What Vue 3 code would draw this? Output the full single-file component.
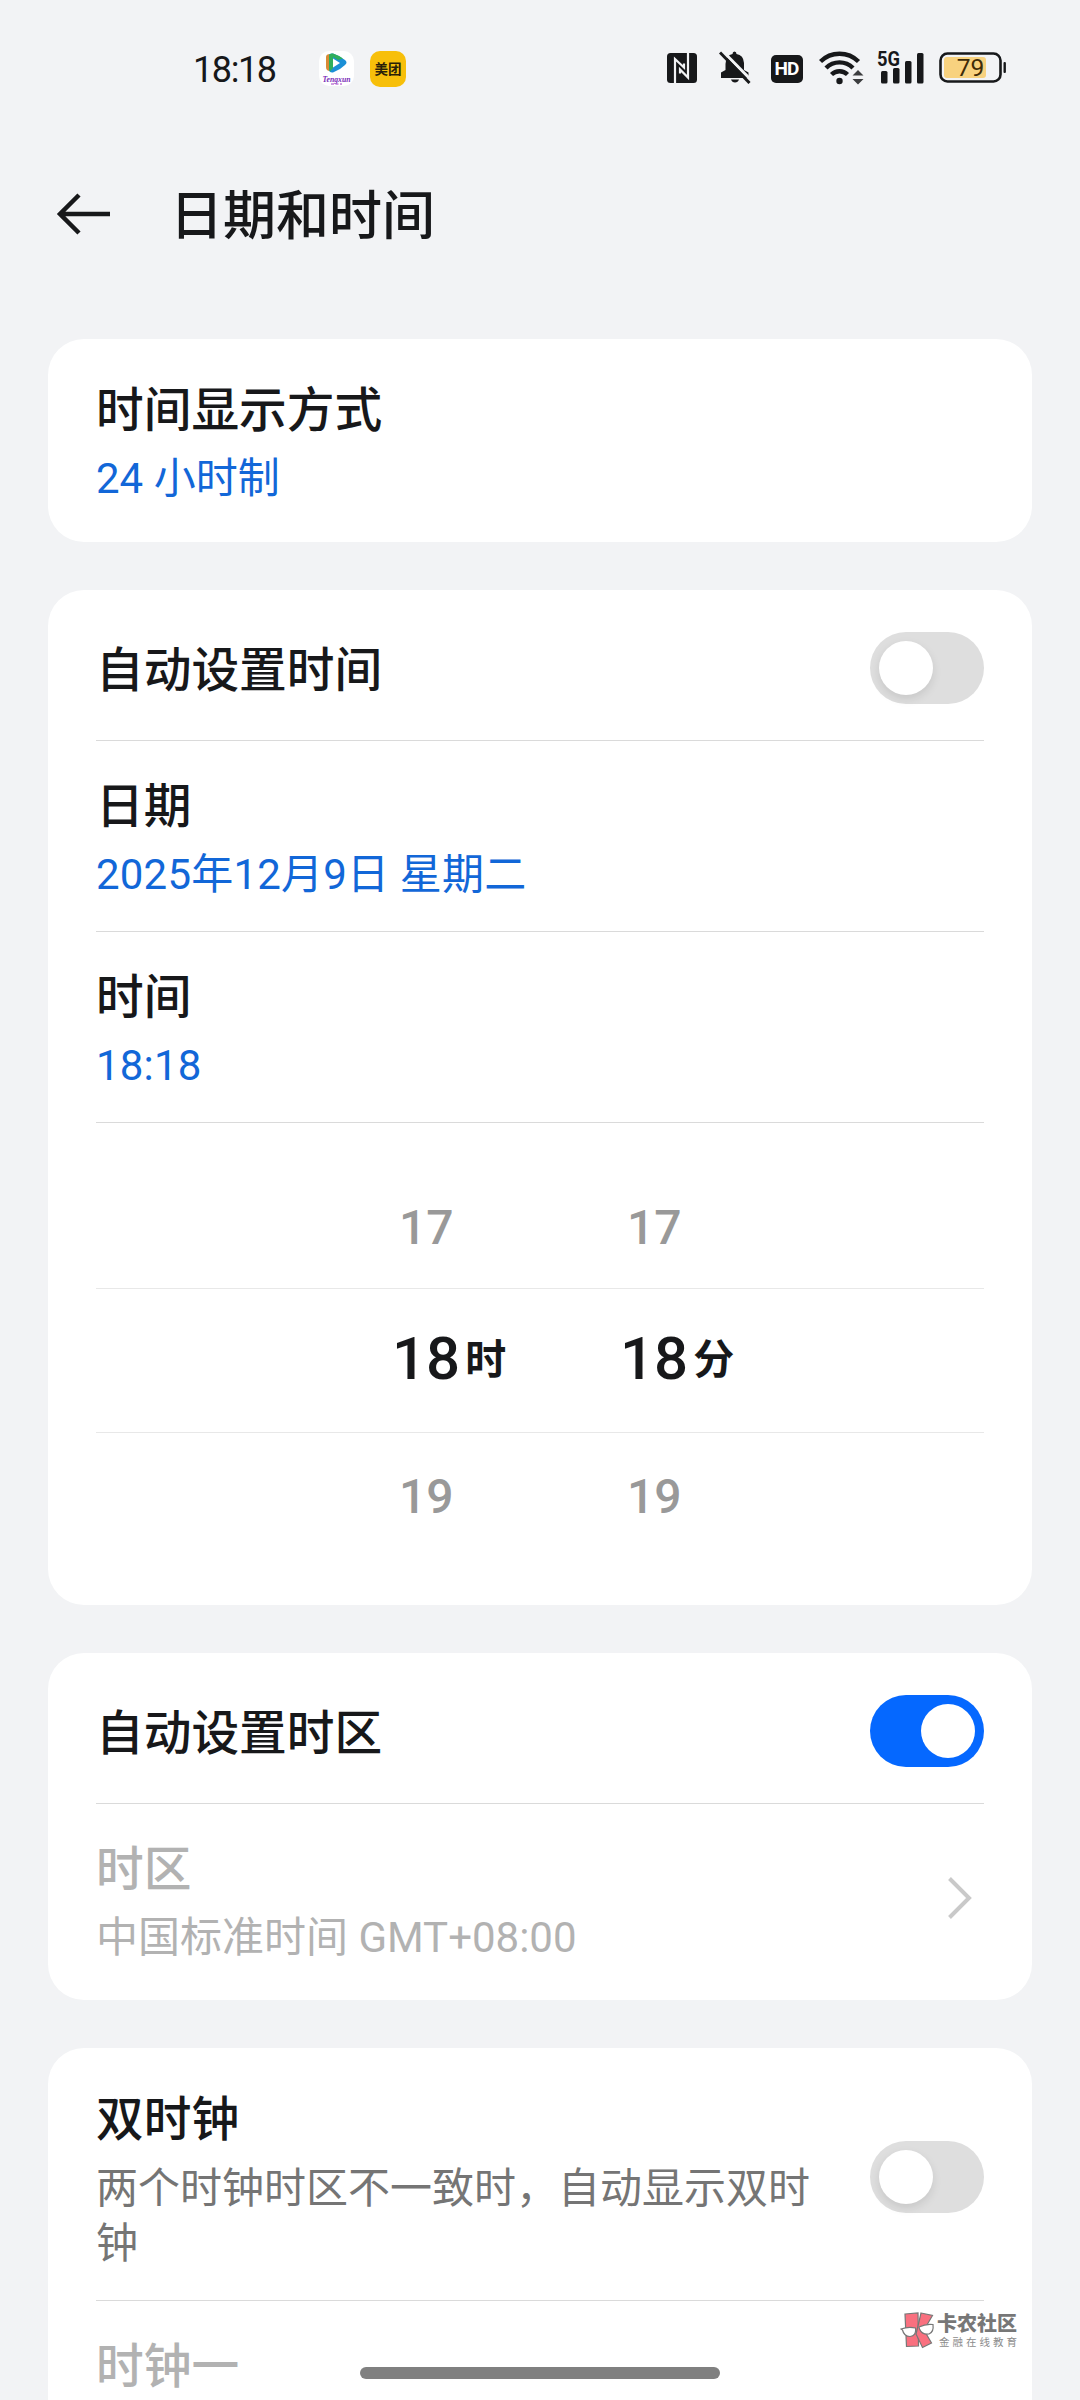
<script setup>
import { ref } from 'vue'

const autoTime = ref(false)
const autoZone = ref(true)
const dualClock = ref(false)

const wheels = [
  { prev: '17', value: '18', unit: '时', next: '19' },
  { prev: '17', value: '18', unit: '分', next: '19' },
]
</script>

<template>
  <div class="screen">
    <header class="status">
      <span class="clock">18:18</span>
      <svg class="app-video" width="36" height="36" viewBox="0 0 36 36">
        <rect x="0" y="0" width="35" height="35" rx="10" fill="#fff" />
        <path d="M7 6 Q7 3 11 3 L14 4 V20 L11 20 Q7 20 7 16 Z" fill="#d98a35" />
        <path d="M10 5 Q10 2 14 2.500 Q21 5 26 9 Q29 11.500 26 14 Q21 19 14 21.500 Q10 22 10 18 Z" fill="#1a8fd6" />
        <path d="M10 5 Q10 2 14 2.500 Q20 4.500 24 7.500 L19 9 L14 6 V17 L11 20.500 Q10 19 10 17 Z" fill="#2fae5c" />
        <path d="M14 7.500 L21 12 L14 16.500 Z" fill="#fff" />
        <text x="17.500" y="30.500" text-anchor="middle" textLength="28" lengthAdjust="spacingAndGlyphs" class="app-script">Tengxun</text>
        <path d="M12 33 H23" stroke="#a13ac4" stroke-width="1" stroke-dasharray="3 1.500" />
      </svg>
      <span class="app-meituan">美团</span>
      <span class="grow"></span>
      <svg class="nfc" width="30" height="30" viewBox="0 0 30 30">
        <rect width="30" height="30" rx="3.500" fill="#17181a" />
        <path d="M8 30 V6 L17 14.500 V10.500" fill="none" stroke="#f2f3f5" stroke-width="2.200" />
        <path d="M21 0 V24.500 L13 16.500 V20.500" fill="none" stroke="#f2f3f5" stroke-width="2.200" />
      </svg>
      <svg class="bell" width="32" height="34" viewBox="0 0 32 34">
        <path d="M6.500 13 Q7 4 13.500 3 Q13.500 .5 15.500 .5 Q17.500 .5 17.500 3 Q24.500 4 25 12 V19 L29.500 21.500 V27 H2 V21.500 L6.500 19 Z" fill="#17181a" />
        <path d="M12 28.500 H20 Q19 31.500 16 31.500 Q13 31.500 12 28.500 Z" fill="#17181a" />
        <path d="M3.500 0 L32 29" stroke="#f2f3f5" stroke-width="3" />
        <path d="M1 1.500 L30.500 32" stroke="#17181a" stroke-width="3" />
      </svg>
      <span class="hd">HD</span>
      <svg class="wifi" width="46" height="36" viewBox="0 0 46 36">
        <g fill="none" stroke="#17181a" stroke-width="4.400">
          <path d="M1.500 11.500 A27 27 0 0 1 39.500 11.500" />
          <path d="M7 18 A19 19 0 0 1 34 18" />
          <path d="M12.500 24.500 A11.500 11.500 0 0 1 28.500 24.500" />
        </g>
        <circle cx="20.500" cy="31" r="3.200" fill="#17181a" />
        <path d="M38.500 20 L44.500 25.500 H32.500 Z" fill="#f2f3f5" stroke="#f2f3f5" stroke-width="3" />
        <path d="M39 20 L44.500 25.500 H33.500 Z M39 34.500 L44.500 29 H33.500 Z" fill="#3c3d3f" />
      </svg>
      <svg class="signal" width="48" height="36" viewBox="0 0 48 36">
        <g fill="#17181a">
          <rect x="4" y="21" width="6.500" height="12.500" rx="1.500" />
          <rect x="16" y="18" width="6.500" height="15.500" rx="1.500" />
          <rect x="28" y="11" width="6.500" height="22.500" rx="1.500" />
          <rect x="40" y="3" width="6.500" height="30.500" rx="1.500" />
          <text x="0" y="16.300" textLength="23" lengthAdjust="spacingAndGlyphs" class="net">5G</text>
        </g>
      </svg>
      <svg class="battery" width="68" height="32" viewBox="0 0 68 32">
        <rect x="1.500" y="1.500" width="60" height="28" rx="7" fill="none" stroke="#17181a" stroke-width="2.600" />
        <rect x="5" y="5" width="42" height="21" rx="3" fill="#f8d27f" />
        <rect x="64.500" y="10" width="2.400" height="11" rx="1" fill="#17181a" />
        <text x="31.500" y="24" text-anchor="middle" class="pct">79</text>
      </svg>
    </header>

    <div class="titlebar">
      <svg width="56" height="44" viewBox="0 0 56 44">
        <path d="M54 22 H4 M23 3 L4 22 L23 41" fill="none" stroke="#17181a" stroke-width="4.500" />
      </svg>
      <h1>日期和时间</h1>
    </div>

    <main>
      <section class="card">
        <div class="row">
          <div class="text">
            <div class="name">时间显示方式</div>
            <div class="value">24 小时制</div>
          </div>
        </div>
      </section>

      <section class="card">
        <div class="row single">
          <div class="name">自动设置时间</div>
          <button class="switch" :class="{ on: autoTime }" @click="autoTime = !autoTime"><i></i></button>
        </div>
        <div class="row">
          <div class="text">
            <div class="name">日期</div>
            <div class="value wide">2025年12月9日 星期二</div>
          </div>
        </div>
        <div class="row lined">
          <div class="text">
            <div class="name">时间</div>
            <div class="value wide">18:18</div>
          </div>
        </div>
        <div class="picker">
          <div class="band side">
            <span v-for="(w, i) in wheels" :key="i" class="cell">{{ w.prev }}</span>
          </div>
          <div class="band current">
            <span v-for="(w, i) in wheels" :key="i" class="cell">{{ w.value }}<em>{{ w.unit }}</em></span>
          </div>
          <div class="band side last">
            <span v-for="(w, i) in wheels" :key="i" class="cell">{{ w.next }}</span>
          </div>
        </div>
      </section>

      <section class="card">
        <div class="row single">
          <div class="name">自动设置时区</div>
          <button class="switch" :class="{ on: autoZone }" @click="autoZone = !autoZone"><i></i></button>
        </div>
        <div class="row disabled">
          <div class="text">
            <div class="name">时区</div>
            <div class="value">中国标准时间 GMT+08:00</div>
          </div>
          <svg class="chevron" width="24" height="42" viewBox="0 0 24 42">
            <path d="M1.500 1.500 L21 21 L1.500 40.500" fill="none" stroke="#c9c9c9" stroke-width="4" />
          </svg>
        </div>
      </section>

      <section class="card open">
        <div class="row tall">
          <div class="text">
            <div class="name">双时钟</div>
            <div class="value note">两个时钟时区不一致时，自动显示双时钟</div>
          </div>
          <button class="switch" :class="{ on: dualClock }" @click="dualClock = !dualClock"><i></i></button>
        </div>
        <div class="row disabled">
          <div class="text">
            <div class="name">时钟一</div>
          </div>
        </div>
      </section>
    </main>

    <div class="mark">
      <svg width="36" height="38" viewBox="0 0 36 38">
        <g fill="#f9707f" stroke="#777" stroke-width="1.200">
          <path d="M5 2 L18 1 L18.500 34 L6.500 34.500 Z" />
          <path d="M21 1 L32.500 3.500 L24 18 L31.500 31 L22.500 35.500 L16 22 L18 14 Z" />
        </g>
        <g fill="#fff" stroke="#777" stroke-width="1.200">
          <path d="M1 17 Q8 14.500 15.500 16 Q16.500 24 10 24.500 Q4 24.500 2.500 18 Z" />
          <path d="M19 15 Q26 11.500 33 12.500 Q34 20 29 22 Q22 23 19.500 17 Z" />
        </g>
      </svg>
      <div>
        <b>卡农社区</b>
        <small>金融在线教育</small>
      </div>
    </div>
    <div class="homebar"></div>
  </div>
</template>

<style>
html,
body {
  margin: 0;
  background: #f2f3f5;
}
</style>

<style scoped>
.screen {
  position: relative;
  width: 1080px;
  height: 2400px;
  overflow: hidden;
  background: #f2f3f5;
  color: #17181a;
  font-family: Roboto, 'Noto Sans CJK SC', sans-serif;
}

.status {
  display: flex;
  align-items: flex-start;
  height: 100px;
  padding: 51px 73px 0 193px;
  box-sizing: border-box;
  margin-bottom: 60px;
}
.clock {
  width: 126px;
  font-size: 36px;
  line-height: 38px;
  letter-spacing: -1.4px;
}
.app-video {
  margin-right: 15px;
}
.app-script {
  font: italic 700 9px 'Liberation Serif', serif;
  fill: #7a2bb8;
}
.app-meituan {
  width: 36px;
  height: 36px;
  border-radius: 10px;
  background: #f7bf0a;
  color: #2a1f08;
  font-size: 13.5px;
  font-weight: 700;
  line-height: 36px;
  text-align: center;
}
.grow {
  flex: 1;
}
.nfc {
  margin: 2px 22px 0 0;
}
.bell {
  margin-right: 20px;
}
.hd {
  width: 32px;
  height: 28px;
  margin: 4px 16px 0 0;
  border-radius: 5px;
  background: #17181a;
  color: #fff;
  font-size: 19px;
  font-weight: 700;
  line-height: 28px;
  letter-spacing: -1px;
  text-indent: -1px;
  text-align: center;
}
.wifi {
  margin: -1px 12px 0 0;
}
.signal {
  margin: -1px 14px 0 0;
  overflow: visible;
}
.net {
  font: 700 21px Roboto, sans-serif;
}
.battery {
  margin-top: 1px;
}
.pct {
  font: 400 24.5px Roboto, sans-serif;
  fill: #3f2c08;
}

.titlebar {
  display: flex;
  align-items: center;
  height: 108px;
  padding-left: 56px;
}
.titlebar h1 {
  margin: 6px 0 0 58px;
  font-size: 53px;
  font-weight: 500;
  line-height: 64px;
}

main {
  display: flex;
  flex-direction: column;
  gap: 48px;
  margin: 71px 48px 0;
}
.card {
  padding: 6px 48px;
  border-radius: 36px;
  background: #fff;
}
.card.open {
  border-radius: 36px 36px 0 0;
  height: 400px;
}
.row {
  display: flex;
  align-items: center;
  justify-content: space-between;
  min-height: 190px;
  box-sizing: content-box;
}
.row + .row {
  border-top: 1px solid #dadada;
}
.card > .row:only-child {
  min-height: 191px;
}
.row.single {
  min-height: 144px;
}
.row.tall {
  min-height: 246px;
}
.row.lined {
  border-bottom: 1px solid #dadada;
}
.text {
  align-self: flex-start;
  padding: 34px 0 0;
}
.name {
  font-size: 47.7px;
  font-weight: 500;
  line-height: 64px;
}
.single .name {
  padding-top: 5px;
}
.value {
  margin-top: 8px;
  color: #1267d8;
  font-size: 42px;
  line-height: 55px;
}
.value.wide {
  letter-spacing: 0.2px;
}
.value.note {
  width: 730px;
  margin-top: 9px;
  color: #757575;
}
.disabled .name,
.disabled .value {
  color: #b2b2b2;
}
.chevron {
  margin: 0 12px 2px 0;
}

.switch {
  flex: none;
  width: 114px;
  height: 72px;
  padding: 9px;
  border: 0;
  border-radius: 36px;
  background: #dedede;
}
.switch i {
  display: block;
  width: 54px;
  height: 54px;
  border-radius: 50%;
  background: #fff;
  box-shadow: 0 4px 10px rgba(0, 0, 0, 0.1);
}
.switch.on {
  background: #0568ff;
}
.switch.on i {
  margin-left: auto;
  box-shadow: none;
}

.picker {
  height: 476px;
}
.band {
  display: flex;
  box-sizing: border-box;
}
.cell {
  width: 228px;
  white-space: nowrap;
}
.side {
  height: 165px;
  padding-top: 75px;
  padding-left: 303px;
  color: #999;
  font-size: 48px;
  font-weight: 500;
  line-height: 60px;
}
.side.last {
  padding-top: 34px;
}
.current {
  height: 145px;
  padding-left: 296px;
  border-top: 1px solid #e8e8e8;
  border-bottom: 1px solid #e8e8e8;
  font-size: 60px;
  font-weight: 500;
  line-height: 140px;
}
.current em {
  margin-left: 5px;
  font-size: 41px;
  font-style: normal;
  font-weight: 700;
  position: relative;
  top: -5px;
}

.mark {
  position: absolute;
  left: 900px;
  top: 2312px;
  display: flex;
  color: #777;
}
.mark div {
  display: flex;
  flex-direction: column;
  margin-left: 1px;
}
.mark b {
  font-size: 20px;
  font-weight: 900;
  line-height: 24px;
}
.mark small {
  margin: 0 0 0 2px;
  font-size: 10.5px;
  line-height: 13px;
  letter-spacing: 3px;
  color: #8c8c8c;
}
.homebar {
  position: absolute;
  left: 360px;
  top: 2367px;
  width: 360px;
  height: 12px;
  border-radius: 6px;
  background: #808080;
}
</style>
